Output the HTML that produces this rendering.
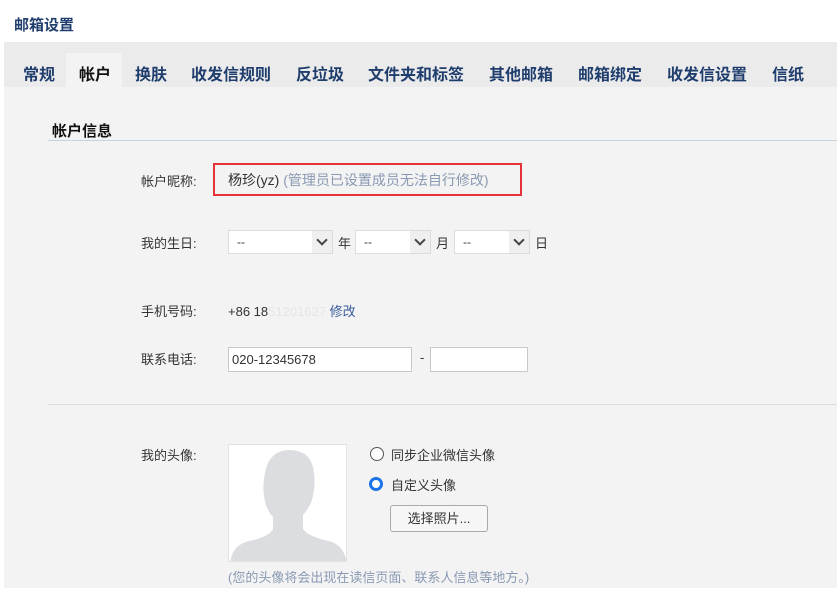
<!DOCTYPE html><html><head><meta charset="utf-8"><style>
body{margin:0;width:837px;height:602px;background:#fff;font-family:"Liberation Sans","Noto Sans CJK SC",sans-serif;position:relative;overflow:hidden;font-size:13px;color:#333}
.a{position:absolute}
.title{left:14px;top:14px;font-size:15px;font-weight:bold;color:#1f3d6d}
.bar{left:4px;top:42px;width:833px;height:45px;background:#ebebeb}
.main{left:4px;top:87px;width:833px;height:501px;background:#f3f3f3}
.tab{top:61px;font-size:16px;font-weight:bold;color:#1f3d6d;white-space:nowrap}
.act{left:66px;top:53px;width:56px;height:34px;background:#f3f3f3}
.lbl{left:141px;font-size:13px;color:#333}
.sel{height:24px;background:#fff;border:1px solid #d9dde2;box-sizing:border-box;font-size:12px;padding:4px 8px;color:#333}
.sel i{position:absolute;right:0;top:0;width:20px;height:22px;background:#efefef}
.sel i:after{content:"";position:absolute;left:6px;top:5px;width:6px;height:6px;border-right:2px solid #444;border-bottom:2px solid #444;transform:rotate(45deg)}
.inp{height:25px;background:#fff;border:1px solid #c8c8c8;box-sizing:border-box;font-size:13px;padding:4px 3px}
</style></head><body>
<div class="a title">邮箱设置</div>
<div class="a bar"></div>
<div class="a main"></div>
<div class="a act"></div>
<div class="a tab" style="left:23px">常规</div>
<div class="a tab" style="left:79px;color:#111">帐户</div>
<div class="a tab" style="left:135px">换肤</div>
<div class="a tab" style="left:191px">收发信规则</div>
<div class="a tab" style="left:296px">反垃圾</div>
<div class="a tab" style="left:368px">文件夹和标签</div>
<div class="a tab" style="left:489px">其他邮箱</div>
<div class="a tab" style="left:578px">邮箱绑定</div>
<div class="a tab" style="left:667px">收发信设置</div>
<div class="a tab" style="left:772px">信纸</div>
<div class="a" style="left:52px;top:120px;font-size:15px;font-weight:bold;color:#111">帐户信息</div>
<div class="a" style="left:48px;top:140px;width:789px;height:1px;background:#c9d3e0"></div>
<div class="a lbl" style="top:171px">帐户昵称:</div>
<div class="a" style="left:213px;top:163px;width:309px;height:33px;border:2px solid #e8323a;box-sizing:border-box"></div>
<div class="a" style="left:228px;top:170px;font-size:14px">杨珍(yz) <span style="color:#8a9ab3">(管理员已设置成员无法自行修改)</span></div>
<div class="a lbl" style="top:233px">我的生日:</div>
<div class="a sel" style="left:228px;top:230px;width:105px">--<i></i></div>
<div class="a" style="left:338px;top:233px">年</div>
<div class="a sel" style="left:355px;top:230px;width:76px">--<i></i></div>
<div class="a" style="left:436px;top:233px">月</div>
<div class="a sel" style="left:454px;top:230px;width:76px">--<i></i></div>
<div class="a" style="left:535px;top:233px">日</div>
<div class="a lbl" style="top:301px">手机号码:</div>
<div class="a" style="left:228px;top:301px">+86 18<span style="color:#e6e6e6">51201627</span> <span style="color:#3a5a9a">修改</span></div>
<div class="a lbl" style="top:349px">联系电话:</div>
<div class="a inp" style="left:228px;top:347px;width:184px">020-12345678</div>
<div class="a" style="left:420px;top:350px">-</div>
<div class="a inp" style="left:430px;top:347px;width:98px"></div>
<div class="a" style="left:48px;top:404px;width:789px;height:1px;background:#dcdcdc"></div>
<div class="a lbl" style="top:445px">我的头像:</div>
<div class="a" style="left:228px;top:444px;width:119px;height:118px;background:#fff;border:1px solid #e2e2e2;box-sizing:border-box;overflow:hidden">
<svg width="119" height="118" viewBox="0 0 119 118"><path d="M38 20 Q45 4 62 5 Q80 6 84 22 Q88 40 82 58 Q78 66 74 70 L74 84 Q80 92 100 96 Q115 100 118 118 L1 118 Q3 100 20 96 Q40 92 44 84 L44 72 Q38 66 36 56 Q32 40 38 20Z" fill="#dcdde0"/></svg></div>
<div class="a" style="left:370px;top:447px;width:12px;height:12px;border:1px solid #555;border-radius:50%;background:#fff"></div>
<div class="a" style="left:391px;top:445px">同步企业微信头像</div>
<div class="a" style="left:369px;top:477px;width:14px;height:14px;border-radius:50%;background:#1a73e8"></div>
<div class="a" style="left:372px;top:480px;width:6px;height:6px;border-radius:50%;background:#fff;border:1px solid #fff"></div>
<div class="a" style="left:391px;top:475px">自定义头像</div>
<div class="a" style="left:390px;top:505px;width:98px;height:27px;border:1px solid #aaa;border-radius:3px;background:#f6f6f6;box-sizing:border-box;text-align:center;line-height:25px">选择照片...</div>
<div class="a" style="left:228px;top:567px;color:#8a9ab3">(您的头像将会出现在读信页面、联系人信息等地方。)</div>
</body></html>
